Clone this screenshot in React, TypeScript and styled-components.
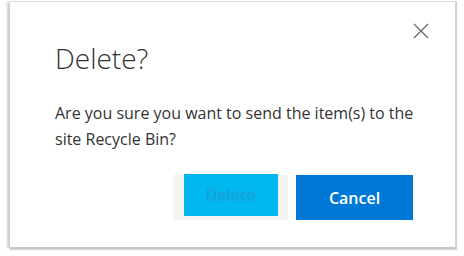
import React from 'react';
import styled, { createGlobalStyle } from 'styled-components';

const GlobalStyle = createGlobalStyle`
    html, body {
        margin: 0;
        padding: 0;
        background: #ffffff;
        font-family: "Open Sans", "Noto Sans", sans-serif;
    }
`
const Page = styled.div`
    width: 464px;
    height: 256px;
    padding: 1px 7px 0 10px;
    box-sizing: border-box;
`
const Dialog = styled.div`
    position: relative;
    width: 447px;
    height: 248px;
    box-sizing: border-box;
    background: #ffffff;
    border-top: 1px solid #dcdcdc;
    border-right: 2px solid #d4d4d4;
    border-bottom: 2px solid #c8c8c8;
    box-shadow: -4px 0 2px -1px #d0d0d0, 0 1px 1px #d8d8d8;
    padding: 38px 42px 0 45px;
    display: flex;
    flex-direction: column;
`
const CloseButton = styled.button`
    position: absolute;
    top: 19px;
    right: 24px;
    width: 20px;
    height: 20px;
    padding: 0;
    border: none;
    background: none;
    display: flex;
    align-items: center;
    justify-content: center;
    color: #666666;
    cursor: pointer;
`
const Title = styled.div`
    color: #333333;
    font-size: 28px;
    font-weight: 300;
    line-height: 36px;
    margin-bottom: 24px;
`
const Message = styled.div`
    color: #333333;
    font-size: 16px;
    line-height: 26px;
    width: 362px;
`
const Actions = styled.div`
    display: flex;
    justify-content: flex-end;
    gap: 8px;
    margin-top: 23px;
`
const GhostFrame = styled.div`
    width: 115px;
    height: 45px;
    background: #f3f3f3;
    display: flex;
    align-items: flex-start;
    justify-content: center;
`
const PrimaryButton = styled.button<{ $disabled?: boolean }>`
    width: ${({ $disabled }) => ($disabled ? '94px' : '117px')};
    height: ${({ $disabled }) => ($disabled ? '42px' : '45px')};
    margin-top: ${({ $disabled }) => ($disabled ? '-1px' : '0')};
    border: none;
    padding: 0;
    background: ${({ $disabled }) => ($disabled ? '#00b7ef' : '#0078d7')};
    color: ${({ $disabled }) => ($disabled ? '#1aa0d4' : '#ffffff')};
    font-family: "Open Sans", "Noto Sans", sans-serif;
    font-size: 16px;
    font-weight: 600;
    cursor: pointer;
`

export default function App() {
    return (
        <Page>
            <GlobalStyle />
            <Dialog>
                <CloseButton aria-label="Close">
                    <svg width="16" height="16" viewBox="0 0 16 16">
                        <path d="M1 1 L15 15 M15 1 L1 15" stroke="currentColor" strokeWidth="1.3" fill="none" />
                    </svg>
                </CloseButton>
                <Title>Delete?</Title>
                <Message>Are you sure you want to send the item(s) to the site Recycle Bin?</Message>
                <Actions>
                    <GhostFrame>
                        <PrimaryButton $disabled>Delete</PrimaryButton>
                    </GhostFrame>
                    <PrimaryButton>Cancel</PrimaryButton>
                </Actions>
            </Dialog>
        </Page>
    )
}
